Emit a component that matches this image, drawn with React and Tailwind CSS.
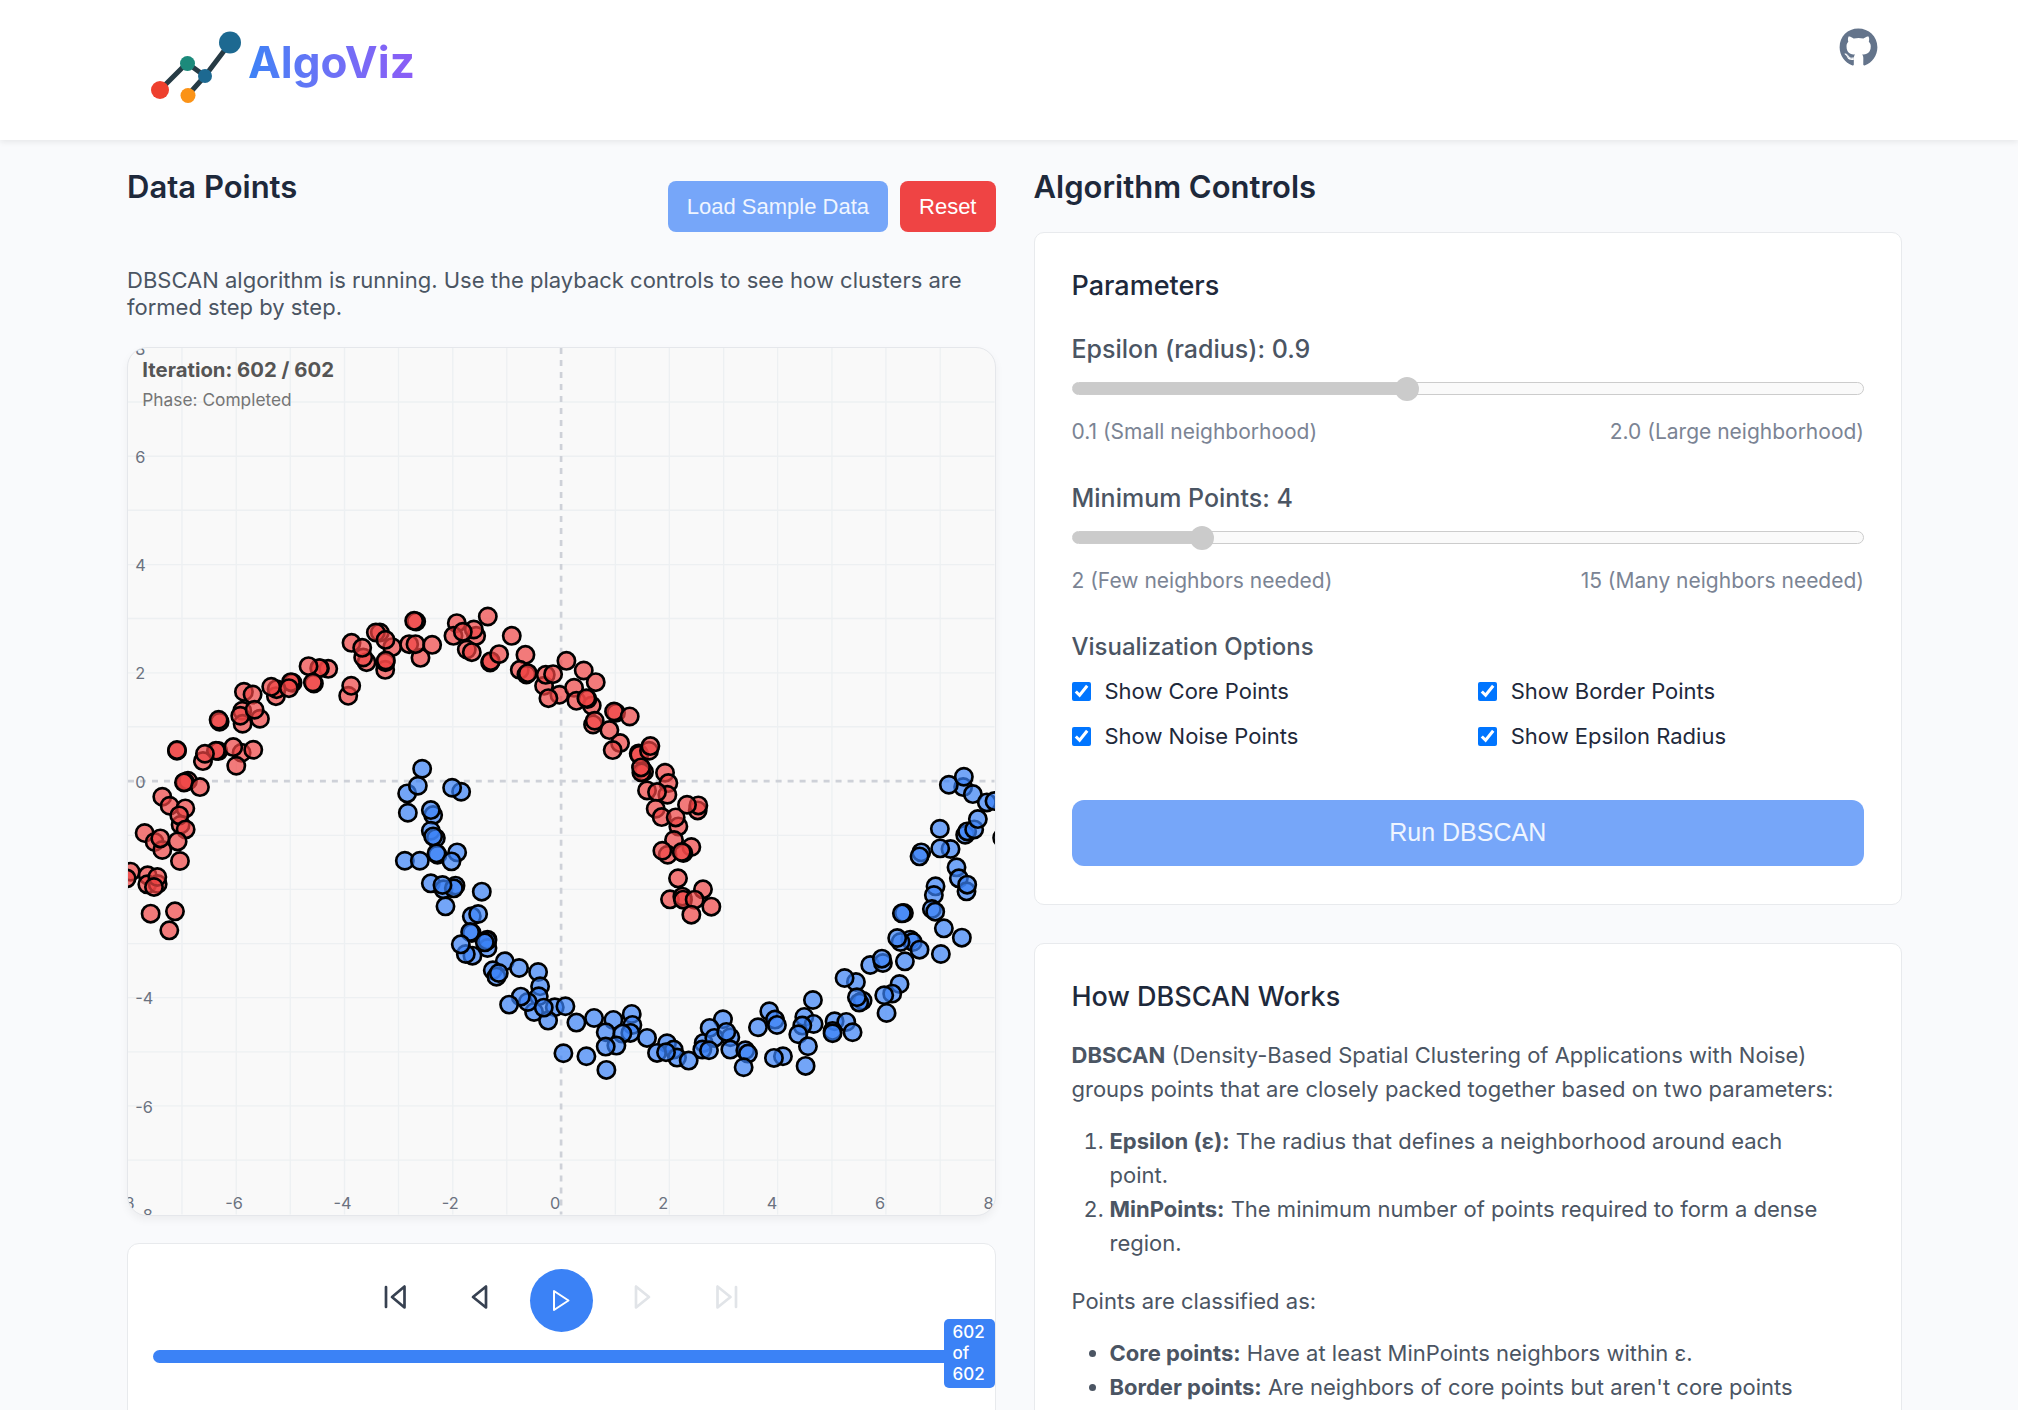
import { useState } from "react";
import { FaGithub } from "react-icons/fa";

const shift = (dx, dy, pts) => pts.map(([x, y]) => [x + dx, y + dy]);

const redPoints = [
  ...shift(-24, 726, [
    [889, 95], [883, 93], [695, 159], [780, 128], [768, 128], [817, 172], [740, 217], [730, 203], [727, 174],
    [797, 150], [796, 240], [797, 217], [798, 212], [868, 163], [902, 204], [887, 163], [937, 165], [625, 237],
    [600, 235], [598, 235], [566, 229], [582, 281], [579, 278], [518, 279], [513, 277], [468, 319], [470, 298],
    [454, 291], [507, 295], [372, 306], [398, 314], [367, 363], [420, 387], [368, 402], [361, 378], [404, 360],
    [299, 396], [296, 390], [685, 318], [694, 288], [171, 483], [171, 481], [295, 484], [288, 483], [249, 514],
    [255, 492], [365, 489], [340, 472], [400, 480], [349, 528], [204, 573], [195, 577], [192, 578], [240, 592],
    [127, 621], [149, 648], [196, 656], [182, 705], [178, 677], [197, 719], [74, 730], [104, 757], [173, 755],
    [127, 781], [121, 746], [180, 814], [32, 846], [20, 866], [83, 857], [82, 884], [113, 883], [112, 862],
    [102, 892], [92, 972], [165, 965], [148, 1022],
  ]),
  ...shift(816, 726, [
    [171, 100], [264, 80], [161, 138], [229, 138], [222, 119], [189, 126], [201, 179], [216, 187], [271, 218],
    [273, 214], [298, 193], [336, 138], [377, 195], [360, 240], [380, 254], [384, 250], [433, 288], [438, 255],
    [460, 253], [479, 315], [446, 325], [500, 213], [552, 242], [588, 277], [523, 294], [530, 333], [576, 347],
    [563, 328], [560, 325], [580, 404], [585, 393], [649, 369], [643, 365], [690, 380], [629, 421], [661, 460],
    [639, 481], [717, 491], [719, 495], [748, 483], [752, 469], [733, 546], [725, 548], [724, 533], [796, 549],
    [806, 580], [803, 615], [742, 602], [772, 607], [768, 657], [786, 682], [836, 710], [828, 683], [894, 662],
    [896, 647], [862, 645], [875, 772], [823, 751], [804, 795], [788, 783], [851, 790], [846, 787], [835, 866],
    [910, 899], [811, 929], [848, 921], [850, 930], [885, 930], [935, 951], [875, 975],
  ]),
];

const bluePoints = [
  ...shift(816, 726, [
    [67, 537], [22, 611], [54, 588], [24, 669], [184, 606], [157, 594], [100, 676], [93, 661], [93, 723],
    [108, 745], [100, 740], [113, 795], [110, 791], [172, 788], [155, 815], [15, 813], [60, 813], [93, 881],
    [131, 899], [167, 888], [162, 896], [128, 886], [137, 950], [246, 906],
  ]),
  ...shift(816, 1176, [
    [216, 530], [235, 523], [216, 580], [211, 577], [263, 600], [263, 625], [262, 603], [255, 608], [218, 648],
    [198, 643], [183, 614], [315, 665], [279, 692], [290, 711], [297, 700], [358, 685], [415, 697], [421, 740],
    [417, 770], [403, 817], [384, 787], [363, 771], [328, 795], [465, 803], [445, 843], [432, 804], [497, 800],
    [530, 849], [583, 835], [641, 841], [696, 823], [698, 856], [692, 880], [618, 878], [668, 882], [650, 918],
    [618, 921], [491, 941], [560, 950], [620, 991], [742, 895], [802, 911], [822, 930], [772, 940], [832, 954],
    [799, 938], [867, 963],
  ]),
  ...shift(1716, 1296, [
    [12, 790], [8, 810], [70, 719], [30, 745], [44, 775], [28, 812], [92, 773], [80, 757], [92, 810], [137, 812],
    [145, 822], [132, 863], [209, 695], [226, 720], [232, 736], [175, 743], [250, 830], [223, 835], [340, 661],
    [314, 712], [342, 733], [308, 738], [296, 764], [325, 800], [318, 859], [405, 725], [440, 727], [399, 754],
    [399, 761], [459, 758], [469, 607], [435, 595], [489, 663], [479, 669], [472, 653], [512, 556], [550, 550],
    [547, 537], [600, 613], [578, 642], [554, 647], [561, 700], [616, 545], [632, 480], [640, 487], [603, 487],
    [593, 475], [660, 510], [733, 446], [787, 474], [724, 523], [613, 400], [607, 401], [665, 218], [660, 230],
    [721, 147], [753, 208], [722, 206], [771, 263], [778, 296], [801, 335], [803, 315], [708, 320], [703, 346],
    [697, 388], [707, 396], [797, 165], [803, 155], [824, 149], [835, 118], [791, 22], [748, 15], [793, -9],
    [820, 43], [862, 68], [885, 64], [908, 174],
  ]),
];

// Plot space: 16 data units across 2601 drawing units, origin in the middle.
const SIZE = 2601;
const MID = 1300;
const units = [-7, -6, -5, -4, -3, -2, -1, 1, 2, 3, 4, 5, 6, 7];
const labels = [-8, -6, -4, -2, 0, 2, 4, 6, 8];
const at = (v) => Math.round(MID + (v * SIZE) / 16);

function Plot() {
  return (
    <svg viewBox="0 0 2601 2601" className="block w-full" role="img" aria-label="Clustered data points">
      <g stroke="#edf0f2" strokeWidth="4">
        {units.map((u) => (
          <g key={u}>
            <line x1={at(u)} x2={at(u)} y1="0" y2={SIZE} />
            <line y1={at(u)} y2={at(u)} x1="0" x2={SIZE} />
          </g>
        ))}
      </g>
      <g stroke="#ced1d8" strokeWidth="8" strokeDasharray="18 18">
        <line x1={MID} x2={MID} y1="0" y2={SIZE} />
        <line y1={MID} y2={MID} x1="0" x2={SIZE} />
      </g>
      <g fill="#6b7280" fontSize="49" className="font-['Inter',sans-serif]">
        {labels.map((v) => (
          <text key={"x" + v} x={at(v) - 33} y={SIZE - 18}>{v}</text>
        ))}
        {labels.filter((v) => v !== -2).map((v) => (
          <text key={"y" + v} x="22" y={at(-v) + 20}>{v}</text>
        ))}
      </g>
      <g stroke="#000000" strokeWidth="8" fillOpacity="0.7">
        {redPoints.map(([x, y], i) => <circle key={i} cx={x} cy={y} r="26" fill="#ef4444" />)}
        {bluePoints.map(([x, y], i) => <circle key={i} cx={x} cy={y} r="26" fill="#3b82f6" />)}
      </g>
      <g className="font-['Inter',sans-serif]">
        <text x="43" y="86" fontSize="61" fontWeight="700" fill="#555555">Iteration: 602 / 602</text>
        <text x="43" y="173" fontSize="52" fill="#757575">Phase: Completed</text>
      </g>
    </svg>
  );
}

function Logo() {
  return (
    <svg viewBox="0 0 90 72" className="h-[72px] w-[90px]" aria-hidden="true">
      <g stroke="#263b45" strokeWidth="5">
        <path d="M9 59 36 32 54 45 79 12M54 45 37 64" fill="none" />
      </g>
      <circle cx="9" cy="59" r="9" fill="#ee402e" />
      <circle cx="36.500" cy="32.500" r="7.500" fill="#1c8a7b" />
      <circle cx="54" cy="45" r="7" fill="#1d6991" />
      <circle cx="37" cy="64.500" r="7.500" fill="#fb9317" />
      <circle cx="79" cy="11.500" r="11" fill="#1d6991" />
    </svg>
  );
}

function Transport({ d, label, disabled }) {
  return (
    <button type="button" aria-label={label} disabled={disabled} className="flex h-14 w-[67px] items-center justify-center text-[#374151] disabled:text-[#e1e4e8]">
      <svg viewBox="0 0 28 28" className="size-7" fill="none" stroke="currentColor" strokeWidth="2.700" strokeLinejoin="round" strokeLinecap="round">
        <path d={d} />
      </svg>
    </button>
  );
}

function Range({ id, label, value, min, max, step, onChange, low, high }) {
  const pct = ((value - min) / (max - min)) * 100;
  return (
    <div className="mb-[37px]">
      <label htmlFor={id} className="block text-[25px] leading-[30px] font-medium text-[#4b5563]">{label}: {value}</label>
      <input
        id={id}
        type="range"
        min={min}
        max={max}
        step={step}
        value={value}
        onChange={(e) => onChange(Number(e.target.value))}
        style={{ "--fill": `calc(12px + (100% - 24px) * ${pct / 100})` }}
        className="mt-3 block h-6 w-full appearance-none bg-transparent [&::-webkit-slider-runnable-track]:h-[13px] [&::-webkit-slider-runnable-track]:rounded-full [&::-webkit-slider-runnable-track]:border [&::-webkit-slider-runnable-track]:border-[#cccccc] [&::-webkit-slider-runnable-track]:bg-[linear-gradient(to_right,#cbcbcb_var(--fill),#fafafa_var(--fill))] [&::-webkit-slider-thumb]:-mt-[6px] [&::-webkit-slider-thumb]:size-6 [&::-webkit-slider-thumb]:appearance-none [&::-webkit-slider-thumb]:rounded-full [&::-webkit-slider-thumb]:bg-[#cbcbcb]"
      />
      <div className="mt-[18px] flex justify-between text-[21px] leading-[28px] text-[#7b8494]">
        <span>{low}</span>
        <span>{high}</span>
      </div>
    </div>
  );
}

const options = ["Show Core Points", "Show Border Points", "Show Noise Points", "Show Epsilon Radius"];

export default function App() {
  const [eps, setEps] = useState(0.9);
  const [minPts, setMinPts] = useState(4);
  return (
    <div className="h-screen overflow-hidden bg-[#f9fafc] font-['Inter',sans-serif] text-[#1e293b]">
      <header className="flex h-[140px] items-start justify-between bg-white pr-[140px] pl-[151px] shadow-[0_2px_6px_rgba(0,0,0,0.08)]">
        <a href="#" className="mt-[31px] flex items-center gap-[7px]">
          <Logo />
          <span className="-mt-[10px] bg-linear-to-r from-[#3b82f6] to-[#8b5cf6] bg-clip-text text-[44px] leading-[56px] font-bold text-transparent">AlgoViz</span>
        </a>
        <a href="#" aria-label="GitHub" className="mt-[28px] text-[#64748b]">
          <FaGithub className="size-[39px]" />
        </a>
      </header>

      <main className="grid grid-cols-2 items-start gap-[38px] pt-[26px] pr-[116px] pl-[127px]">
        <section>
          <div className="flex items-start justify-between">
            <h2 className="mt-[3px] text-[31px] leading-[36px] font-semibold">Data Points</h2>
            <div className="mt-[15px] flex gap-3 font-['Liberation_Sans',sans-serif] text-[22px] leading-[25px] text-white">
              <button type="button" disabled className="rounded-lg bg-[#76a6f9] px-[19px] py-[13px] text-[#eff5ff]">Load Sample Data</button>
              <button type="button" className="rounded-lg bg-[#ef4444] px-[19px] py-[13px]">Reset</button>
            </div>
          </div>
          <p className="mt-[35px] text-[22px] leading-[27px] text-[#4b5563]">
            DBSCAN algorithm is running. Use the playback controls to see how clusters are formed step by step.
          </p>
          <div className="mt-[26px] overflow-hidden rounded-[20px] border border-[#e5e7eb] bg-[#f9f9f9] shadow-[0_4px_8px_rgba(0,0,0,0.05)]">
            <Plot />
          </div>
          <div className="mt-[27px] h-[300px] rounded-[12px] border border-[#e8eaed] bg-white px-[25px] pt-[25px]">
            <div className="flex items-start justify-center gap-[17px]">
              <Transport label="First step" d="M5 4V24M23.500 3.500V24.500L11 14Z" />
              <Transport label="Previous step" d="M21 3.500V24.500L8 14Z" />
              <button type="button" aria-label="Play" className="flex size-[63px] items-center justify-center rounded-full bg-[#3b82f6] text-white">
                <svg viewBox="0 0 28 28" className="size-7" fill="none" stroke="currentColor" strokeWidth="2" strokeLinejoin="round">
                  <path d="M7 5V24L21.500 14.500Z" />
                </svg>
              </button>
              <Transport disabled label="Next step" d="M7 3.500V24.500L20 14Z" />
              <Transport disabled label="Last step" d="M4.500 3.500V24.500L17.500 14ZM23 4V24" />
            </div>
            <div className="relative mt-[18px]">
              <progress max="602" value="602" aria-label="Playback position" className="block h-[13px] w-full appearance-none overflow-hidden rounded-full [&::-webkit-progress-bar]:bg-[#e5e7eb] [&::-webkit-progress-value]:bg-[#3b82f6]" />
              <output className="absolute -top-[31px] -right-[25px] w-[51px] rounded-[5px] bg-[#3b82f6] px-[9px] py-[3px] text-[17px] leading-[21px] font-medium text-white">602 of 602</output>
            </div>
          </div>
        </section>

        <section>
          <h2 className="mt-[3px] text-[31px] leading-[36px] font-semibold">Algorithm Controls</h2>
          <div className="mt-[27px] rounded-[10px] border border-[#e8eaed] bg-white px-[37px] pt-[36px] pb-[38px]">
            <h3 className="mb-[31px] text-[27px] leading-[34px] font-medium">Parameters</h3>
            <Range id="eps" label="Epsilon (radius)" value={eps} min={0.1} max={2} step={0.1} onChange={setEps} low="0.1 (Small neighborhood)" high="2.0 (Large neighborhood)" />
            <Range id="minpts" label="Minimum Points" value={minPts} min={2} max={15} step={1} onChange={setMinPts} low="2 (Few neighbors needed)" high="15 (Many neighbors needed)" />
            <fieldset>
              <legend className="text-[24px] leading-[29px] font-medium text-[#4b5563]">Visualization Options</legend>
              <div className="mt-[15px] grid grid-cols-2 gap-x-5 gap-y-[15px]">
                {options.map((name) => (
                  <label key={name} className="flex items-center gap-[14px] text-[22px] leading-[30px]">
                    <input type="checkbox" defaultChecked className="size-[19px] accent-[#0075ff]" />
                    {name}
                  </label>
                ))}
              </div>
            </fieldset>
            <button type="button" disabled className="mt-[49px] block w-full rounded-[12px] bg-[#76a6f9] pt-[17px] pb-[19px] font-['Liberation_Sans',sans-serif] text-[25px] leading-[30px] text-[#eff5ff]">Run DBSCAN</button>
          </div>

          <div className="mt-[38px] rounded-[10px] border border-[#e8eaed] bg-white px-[37px] pt-[36px] pb-[38px] text-[22px] leading-[34px] text-[#4b5563]">
            <h3 className="mb-6 text-[27px] leading-[34px] font-medium text-[#1e293b]">How DBSCAN Works</h3>
            <p>
              <strong>DBSCAN</strong> (Density-Based Spatial Clustering of Applications with Noise) groups points that are closely packed together based on two parameters:
            </p>
            <ol className="mt-[18px] list-decimal pr-6 pl-[38px]">
              <li><strong>Epsilon (ε):</strong> The radius that defines a neighborhood around each point.</li>
              <li><strong>MinPoints:</strong> The minimum number of points required to form a dense region.</li>
            </ol>
            <p className="mt-6">Points are classified as:</p>
            <ul className="mt-[18px] list-disc pr-6 pl-[38px]">
              <li><strong>Core points:</strong> Have at least MinPoints neighbors within ε.</li>
              <li><strong>Border points:</strong> Are neighbors of core points but aren't core points themselves.</li>
              <li><strong>Noise points:</strong> Are neither core nor border points.</li>
            </ul>
          </div>
        </section>
      </main>
    </div>
  );
}
